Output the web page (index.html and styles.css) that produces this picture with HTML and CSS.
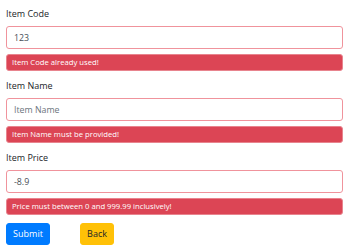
FILE: index.html
```html
<!DOCTYPE html>
<html>
<head>
<meta charset="utf-8">
<link rel="stylesheet" href="styles.css">
</head>
<body>
<form class="form">
  <div class="group">
    <label class="label">Item Code</label>
    <input class="input" type="text" value="123">
    <div class="alert">Item Code already used!</div>
  </div>
  <div class="group">
    <label class="label">Item Name</label>
    <input class="input" type="text" placeholder="Item Name">
    <div class="alert">Item Name must be provided!</div>
  </div>
  <div class="group">
    <label class="label">Item Price</label>
    <input class="input" type="text" value="-8.9">
    <div class="alert">Price must between 0 and 999.99 inclusively!</div>
  </div>
  <div class="actions">
    <button type="button" class="btn btn-primary">Submit</button>
    <button type="button" class="btn btn-warning">Back</button>
  </div>
</form>
</body>
</html>
```

FILE: styles.css
```css
html, body {
  margin: 0;
  padding: 0;
  background: #fff;
}
body {
  font-family: "Open Sans", "Noto Sans", sans-serif;
  color: #212529;
}
.form {
  padding: 7px 5px 0 6px;
  display: flex;
  flex-direction: column;
}
.group {
  display: flex;
  flex-direction: column;
  margin-bottom: 8px;
}
.label {
  font-size: 9px;
  line-height: 14px;
  margin-bottom: 5px;
  color: #212529;
}
.input {
  box-sizing: border-box;
  height: 23px;
  width: 100%;
  margin: 0;
  padding: 0 7px;
  border: 1px solid #f0939c;
  border-radius: 3px;
  font-family: inherit;
  font-size: 8.8px;
  color: #495057;
  background: #fff;
  outline: none;
}
.input::placeholder {
  color: #6c757d;
  opacity: 1;
}
.alert {
  box-sizing: border-box;
  margin-top: 5px;
  height: 17px;
  padding: 0 5px;
  background: #dc4555;
  border: 1px solid #e8848e;
  border-radius: 3px;
  color: #fff;
  font-size: 7.7px;
  line-height: 15px;
  white-space: nowrap;
}
.actions {
  display: flex;
  gap: 30px;
}
.btn {
  box-sizing: border-box;
  height: 22px;
  margin: 0;
  padding: 0 5px;
  border: 1px solid transparent;
  border-radius: 3px;
  font-family: inherit;
  font-size: 9px;
  line-height: 20px;
}
.btn-primary {
  width: 44px;
  background: #007bff;
  border-color: #007bff;
  color: #fff;
}
.btn-warning {
  width: 34px;
  background: #ffc107;
  border-color: #ffc107;
  color: #212529;
}
```
